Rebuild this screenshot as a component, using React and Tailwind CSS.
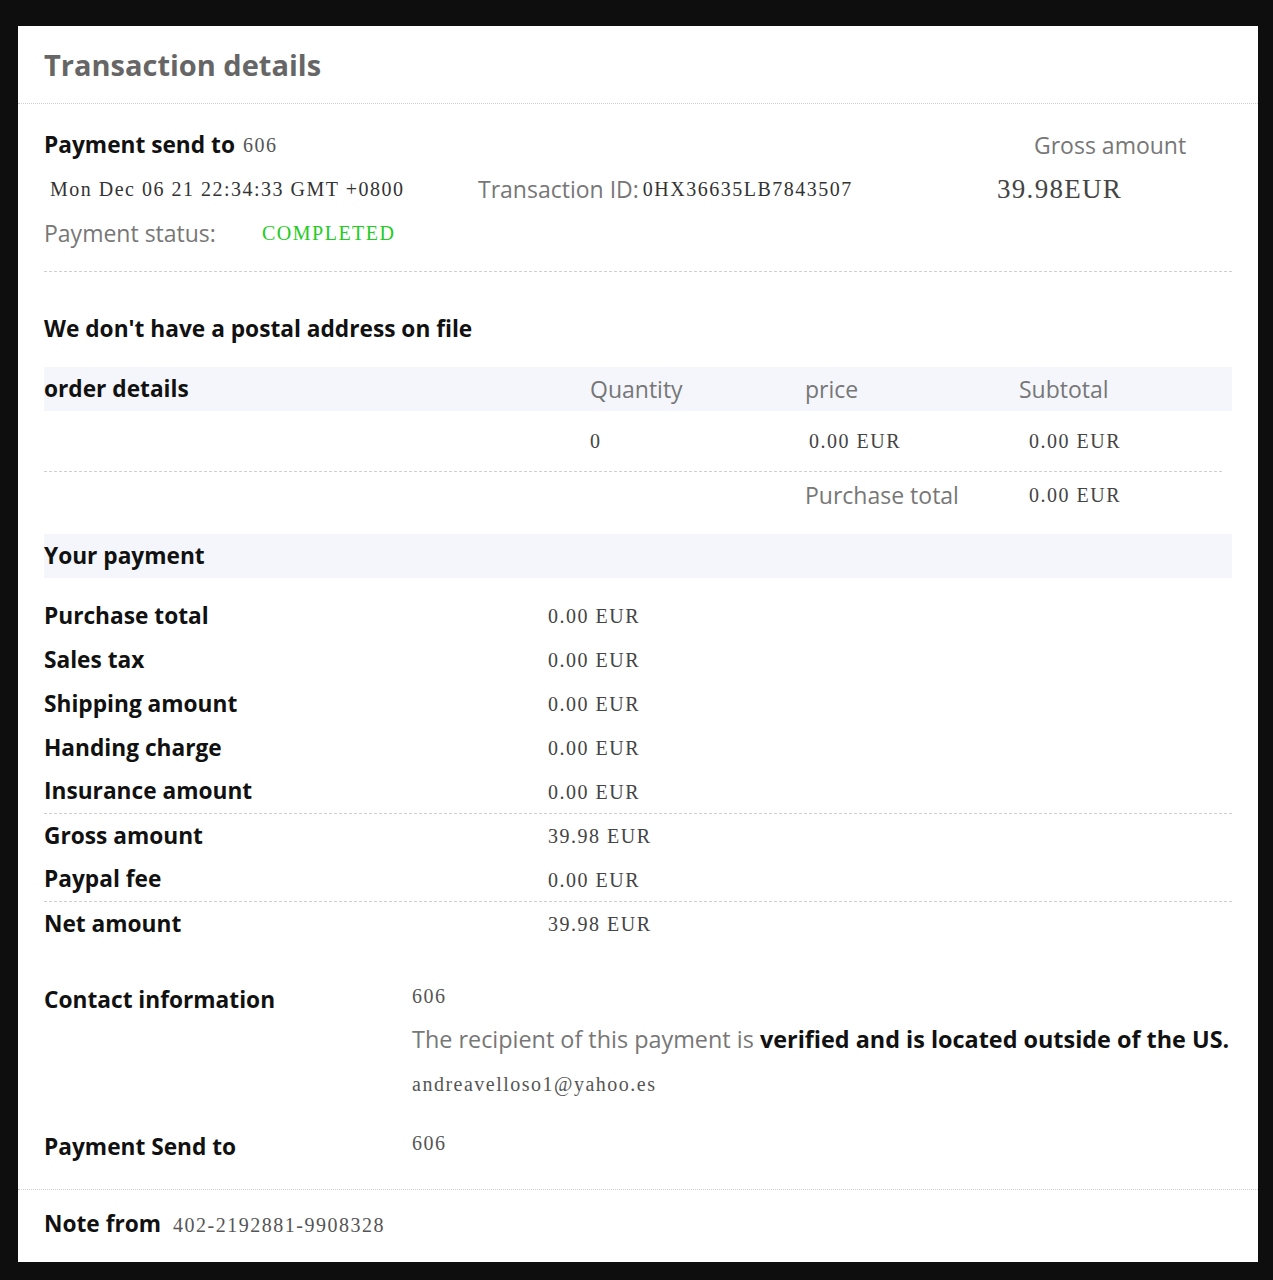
const Label = ({ children }) => (
  <span className="font-['Open_Sans',sans-serif] text-[22.7px] font-bold text-[#111]">{children}</span>
);

const Serif = ({ children, className = '', color = 'text-[#444]' }) => (
  <span className={`font-['Liberation_Serif',serif] text-[20px] tracking-[1.5px] ${color} ${className}`}>
    {children}
  </span>
);

const Gray = ({ children, className = '', size = 'text-[23px]' }) => (
  <span className={`font-['Open_Sans',sans-serif] ${size} text-[#777] ${className}`}>{children}</span>
);

const payments = [
  ['Purchase total', '0.00 EUR'],
  ['Sales tax', '0.00 EUR'],
  ['Shipping amount', '0.00 EUR'],
  ['Handing charge', '0.00 EUR'],
  ['Insurance amount', '0.00 EUR', true],
  ['Gross amount', '39.98 EUR'],
  ['Paypal fee', '0.00 EUR', true],
  ['Net amount', '39.98 EUR'],
];

export default function App() {
  return (
    <div className="min-h-[1280px] bg-[#0e0e0e] pt-[26px] px-[18px]">
      <div className="w-[1240px] h-[1236px] bg-white flex flex-col">
        <div className="h-[78px] flex items-center px-[26px] border-b border-dotted border-[#cfcfcf]">
          <h1 className="font-['Open_Sans',sans-serif] text-[29px] font-bold text-[#666]">Transaction details</h1>
        </div>

        <div className="px-[26px]">
          <div className="pt-[19px] pb-[16px] border-b border-dashed border-[#cfcfcf]">
            <div className="h-[44px] flex items-center">
              <div className="w-[953px] flex items-center gap-[8px]">
                <Label>Payment send to</Label>
                <Serif color="text-[#555]">606</Serif>
              </div>
              <Gray className="ml-[37px]">Gross amount</Gray>
            </div>
            <div className="h-[44px] flex items-center">
              <div className="w-[434px] pl-[6px]">
                <Serif color="text-[#333]">Mon Dec 06 21 22:34:33 GMT +0800</Serif>
              </div>
              <div className="w-[519px] flex items-center">
                <Gray>Transaction ID:</Gray>
                <Serif color="text-[#333]" className="ml-[4px] tracking-[0.5px]">0HX36635LB7843507</Serif>
              </div>
              <span className="font-['Liberation_Serif',serif] text-[27px] tracking-[1.3px] text-[#444]">39.98EUR</span>
            </div>
            <div className="h-[44px] flex items-center">
              <div className="w-[218px]">
                <Gray>Payment status:</Gray>
              </div>
              <Serif color="text-[#22cc22]">COMPLETED</Serif>
            </div>
          </div>

          <div className="h-[44px] mt-[35px] mb-[16px] flex items-center">
            <Label>We don't have a postal address on file</Label>
          </div>

          <div className="h-[44px] bg-[#f4f6fb] grid grid-cols-[546px_215px_214px_1fr] items-center">
            <Label>order details</Label>
            <Gray>Quantity</Gray>
            <Gray>price</Gray>
            <Gray>Subtotal</Gray>
          </div>
          <div className="h-[61px] mr-[10px] border-b border-dashed border-[#cfcfcf] grid grid-cols-[546px_215px_214px_1fr] items-center">
            <div />
            <Serif>0</Serif>
            <Serif className="pl-[4px]">0.00 EUR</Serif>
            <Serif className="pl-[10px]">0.00 EUR</Serif>
          </div>
          <div className="h-[46px] grid grid-cols-[761px_214px_1fr] items-center">
            <div />
            <Gray>Purchase total</Gray>
            <Serif className="pl-[10px]">0.00 EUR</Serif>
          </div>

          <div className="h-[44px] mt-[16px] bg-[#f4f6fb] flex items-center">
            <Label>Your payment</Label>
          </div>
          <div className="mt-[16px]">
            {payments.map(([label, value, line]) => (
              <div
                key={label}
                className={`h-[44px] grid grid-cols-[504px_1fr] items-center ${line ? 'border-b border-dashed border-[#cfcfcf]' : ''}`}
              >
                <Label>{label}</Label>
                <Serif>{value}</Serif>
              </div>
            ))}
          </div>

          <div className="mt-[28px] grid grid-cols-[368px_1fr]">
            <div className="h-[44px] mt-[4px] flex items-center">
              <Label>Contact information</Label>
            </div>
            <div>
              <div className="h-[44px] flex items-center">
                <Serif color="text-[#555]">606</Serif>
              </div>
              <div className="h-[44px] flex items-center">
                <Gray size="text-[23.4px]">
                  The recipient of this payment is{' '}
                  <span className="font-bold text-[#111]">verified and is located outside of the US.</span>
                </Gray>
              </div>
              <div className="h-[44px] flex items-center">
                <Serif color="text-[#555]" className="tracking-[0.5px]">andreavelloso1@yahoo.es</Serif>
              </div>
            </div>
          </div>
          <div className="mt-[15px] pb-[20px] grid grid-cols-[368px_1fr]">
            <div className="h-[44px] mt-[4px] flex items-center">
              <Label>Payment Send to</Label>
            </div>
            <div className="h-[44px] flex items-center">
              <Serif color="text-[#555]">606</Serif>
            </div>
          </div>
        </div>

        <div className="border-t border-dotted border-[#cfcfcf] h-[70px] px-[26px] flex items-center gap-[12px]">
          <Label>Note from</Label>
          <Serif color="text-[#555]" className="tracking-[0.5px]">402-2192881-9908328</Serif>
        </div>
      </div>
    </div>
  );
}
